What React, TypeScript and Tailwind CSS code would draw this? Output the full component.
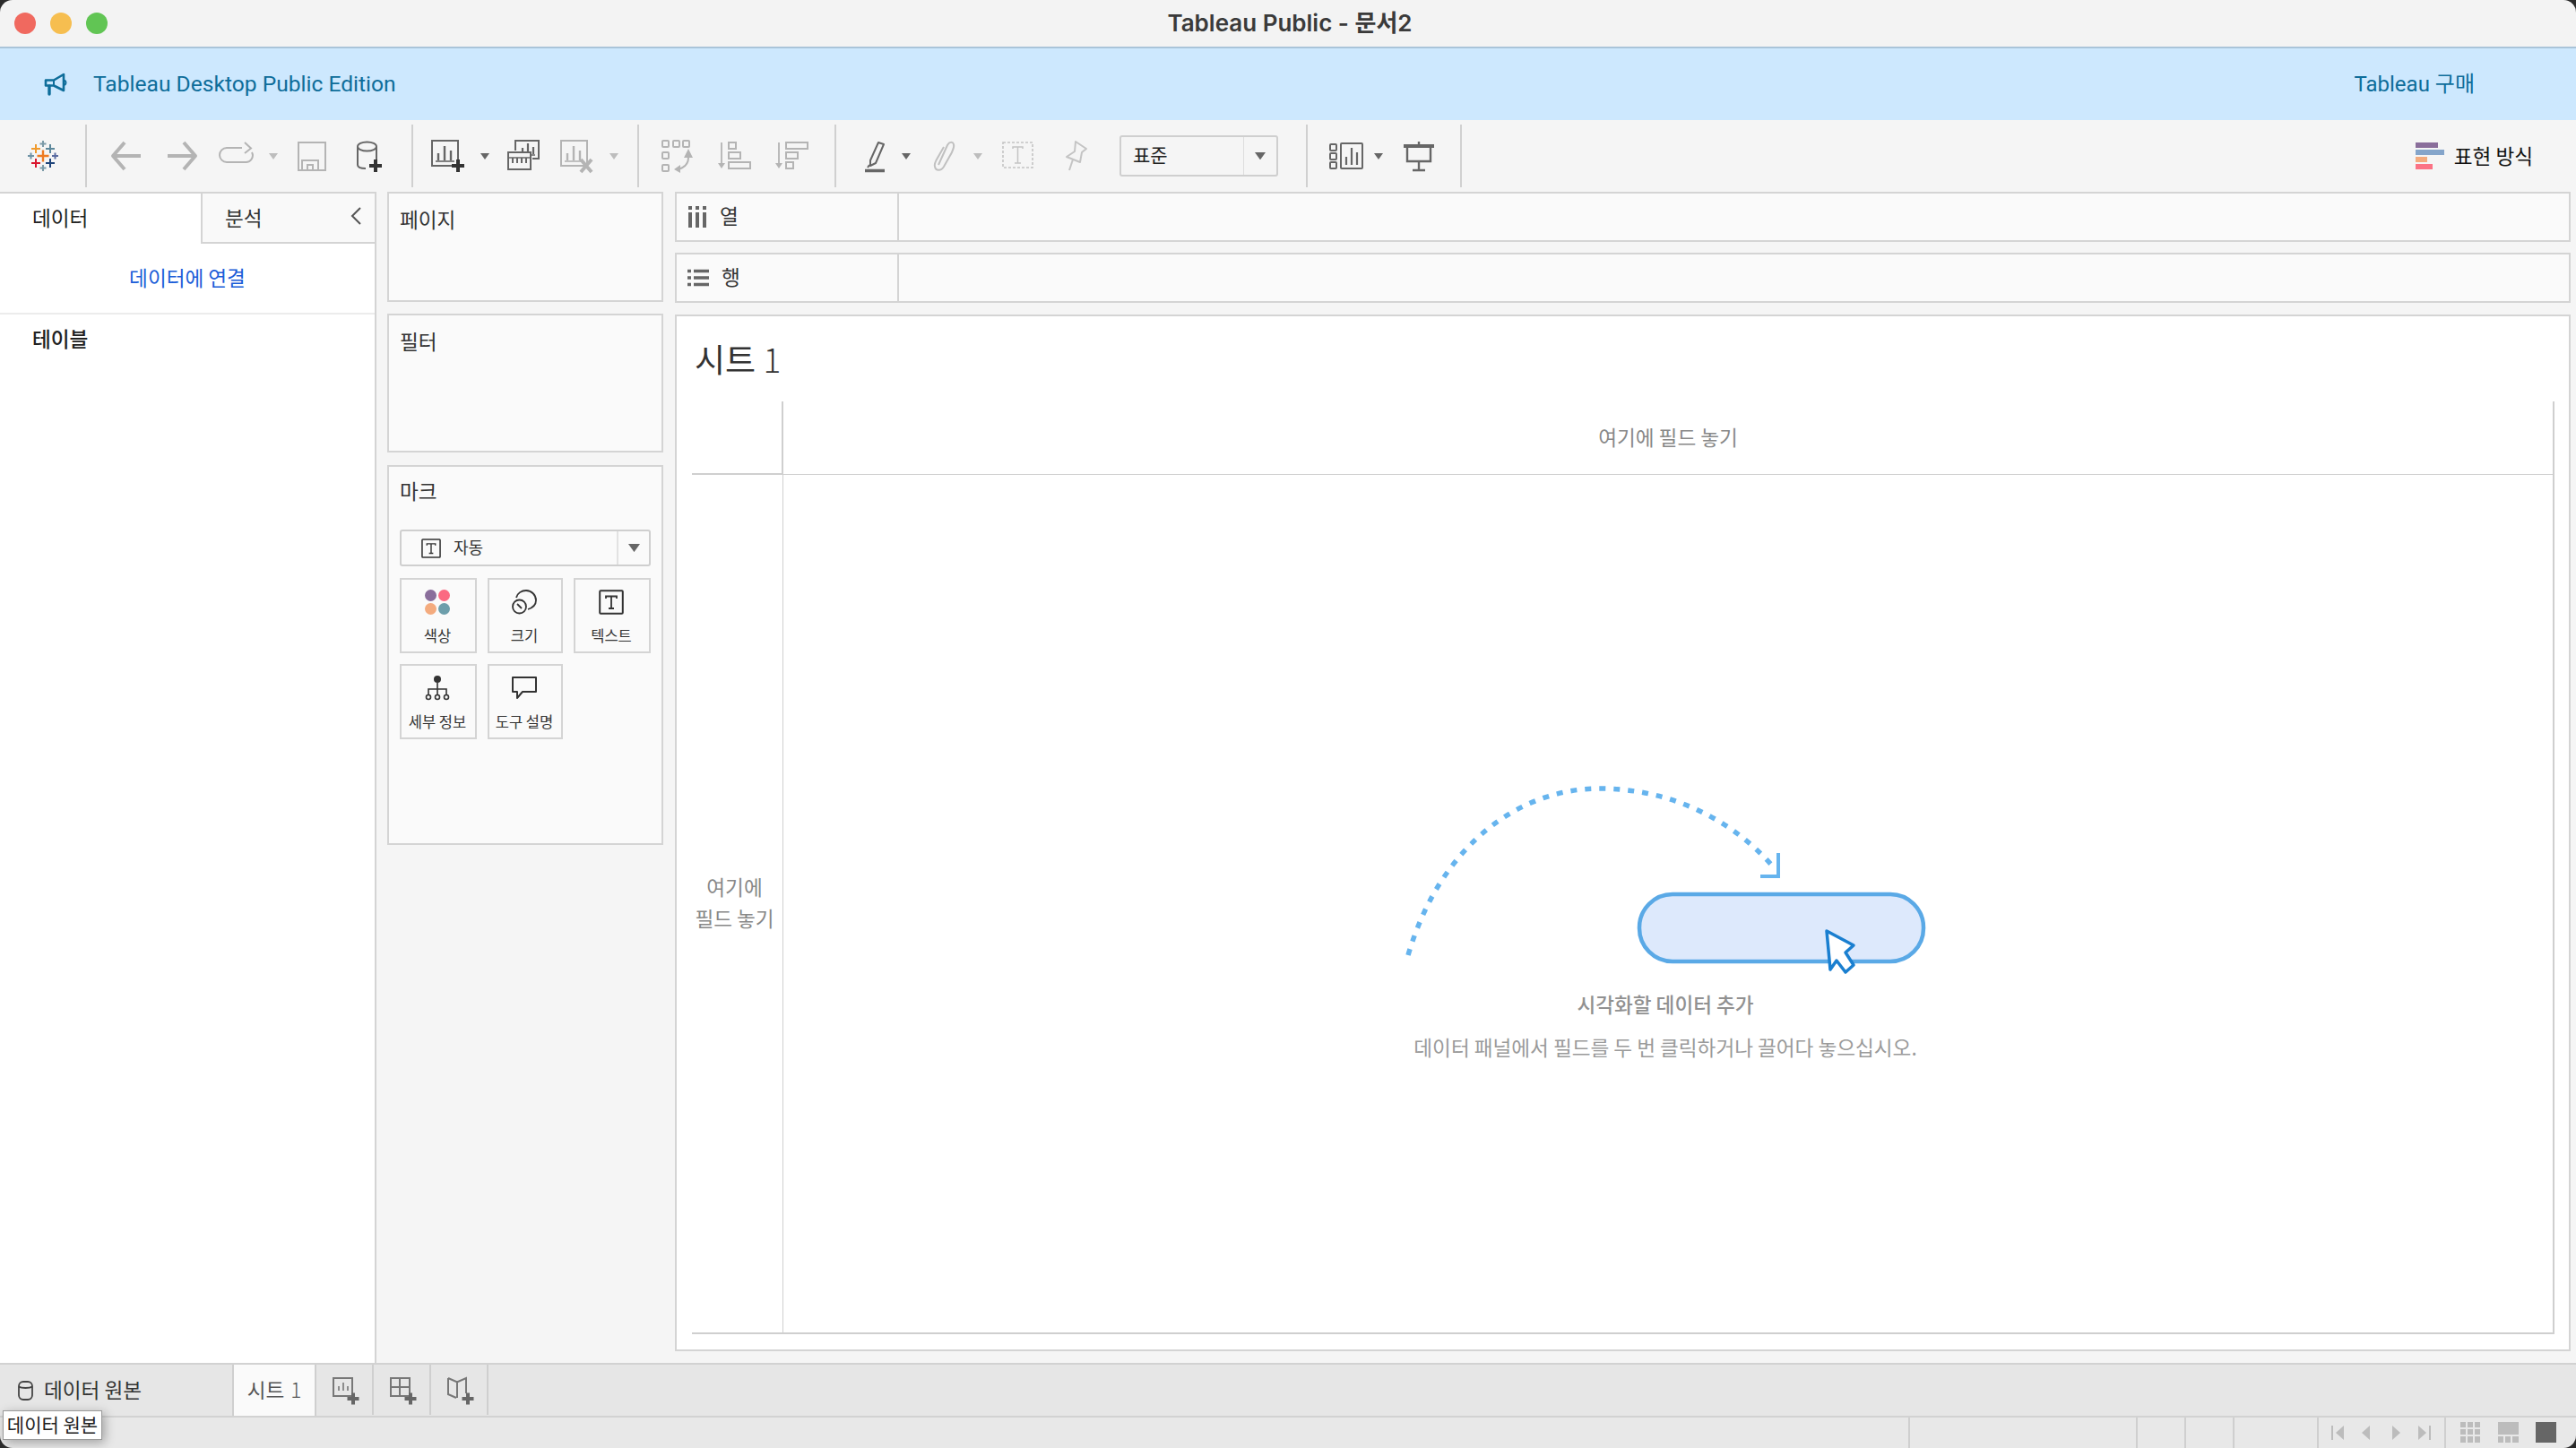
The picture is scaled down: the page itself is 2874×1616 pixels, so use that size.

import React from "react";

const G = "#b4b4b4";

function Svg({ w = 40, h = 40, children }: { w?: number; h?: number; children: React.ReactNode }) {
  return (
    <svg width={w} height={h} viewBox={`0 0 ${w} ${h}`} fill="none" className="block shrink-0">
      {children}
    </svg>
  );
}

function Plus({ x, y, c = "#3c3c3c", s = 14, t = 4 }: { x: number; y: number; c?: string; s?: number; t?: number }) {
  return <path d={`M${x - s / 2} ${y}H${x + s / 2}M${x} ${y - s / 2}V${y + s / 2}`} stroke={c} strokeWidth={t} />;
}

function Caret({ c = "#666666", s = 10 }: { c?: string; s?: number }) {
  return (
    <svg width={s} height={s * 0.7} viewBox="0 0 10 7" className="block shrink-0">
      <path d="M0 0H10L5 7Z" fill={c} />
    </svg>
  );
}

function Logo() {
  const cross = (x: number, y: number, s: number, c: string, t = 2) => (
    <path key={`${x}-${y}`} d={`M${x - s / 2} ${y}H${x + s / 2}M${x} ${y - s / 2}V${y + s / 2}`} stroke={c} strokeWidth={t} />
  );
  return (
    <Svg w={36} h={36}>
      {cross(18, 18, 13, "#ee7b22", 2.4)}
      {cross(10, 10, 10, "#f09a2c", 2)}
      {cross(26, 10, 10, "#5b879b", 2)}
      {cross(10, 26, 10, "#d9172f", 2)}
      {cross(26, 26, 10, "#1f447a", 2)}
      {cross(18, 4.5, 7, "#7b9aa8", 2)}
      {cross(18, 31.5, 7, "#7b9aa8", 2)}
      {cross(4.5, 18, 7, "#6f93a6", 2)}
      {cross(31.5, 18, 7, "#5a6ba0", 2)}
    </Svg>
  );
}

function Megaphone() {
  return (
    <svg width="26" height="26" viewBox="0 0 26 26" fill="none" className="block">
      <path d="M2 8.5H11L22 2V20L11 14.5H2Z" stroke="#0e6d9a" strokeWidth="2.6" strokeLinejoin="round" />
      <path d="M6 15V24" stroke="#0e6d9a" strokeWidth="3.4" strokeLinecap="round" />
      <path d="M11 8V15" stroke="#0e6d9a" strokeWidth="2" />
      <path d="M23 8.5C25 10 25 12.5 23 14" stroke="#0e6d9a" strokeWidth="2" />
    </svg>
  );
}

function BarsIcon({ c, x = 0, y = 0 }: { c: string; x?: number; y?: number }) {
  return (
    <g transform={`translate(${x} ${y})`} stroke={c} strokeWidth="2">
      <path d="M1 3H30V31H1Z" />
      <path d="M8 25V17M15 25V9M22 25V14" strokeWidth="2.4" />
      <path d="M5 26H26" strokeWidth="1.6" />
    </g>
  );
}

const tb = {
  back: (
    <Svg>
      <path d="M37 20H6M19 5L6 20L19 35" stroke={G} strokeWidth="4" strokeLinejoin="round" />
    </Svg>
  ),
  fwd: (
    <Svg>
      <path d="M3 20H34M21 5L34 20L21 35" stroke={G} strokeWidth="4" strokeLinejoin="round" />
    </Svg>
  ),
  redo: (
    <Svg>
      <path d="M26 11H9a7.5 7.5 0 0 0 0 16H30a7.5 7.5 0 0 0 7-11" stroke={G} strokeWidth="2" />
      <path d="M29 5L36 11.5L29 17" stroke={G} strokeWidth="2" />
    </Svg>
  ),
  save: (
    <Svg>
      <path d="M5 5H35V36H5Z" stroke={G} strokeWidth="2" />
      <path d="M9 36V25H27V36" stroke={G} strokeWidth="2" />
      <path d="M15 36V30H21V36" stroke={G} strokeWidth="2" />
    </Svg>
  ),
  ds: (
    <Svg>
      <ellipse cx="19.500" cy="9.500" rx="10.500" ry="5" stroke="#666" strokeWidth="2" />
      <path d="M9 10V30C9 33 12 34 18 34M30 10V24" stroke="#666" strokeWidth="2" />
      <Plus x={29} y={31} c="#333" s={14} t={4} />
    </Svg>
  ),
  add: (
    <Svg>
      <BarsIcon c="#666" x={1} y={0} />
      <Plus x={31} y={31} c="#333" s={14} t={4} />
    </Svg>
  ),
  dup: (
    <Svg>
      <path d="M12 14V3H38V23H31" stroke="#666" strokeWidth="2" />
      <path d="M20 18V11M26 18V6M32 18V10" stroke="#666" strokeWidth="2.200" />
      <path d="M20 19H34" stroke="#666" strokeWidth="1.500" />
      <path d="M4 16H29V35H4Z" stroke="#666" strokeWidth="2" fill="#f5f5f5" />
      <path d="M9 22V28M14 22V28M19 22V28M24 22V28" stroke="#666" strokeWidth="2" />
      <path d="M4 22H29" stroke="#666" strokeWidth="1.500" />
    </Svg>
  ),
  clear: (
    <Svg>
      <BarsIcon c={G} x={3} y={0} />
      <path d="M26 24L38 38M38 24L26 38" stroke={G} strokeWidth="4" />
    </Svg>
  ),
  swap: (
    <Svg w={40} h={40}>
      <g stroke={G} strokeWidth="2">
        <rect x="4" y="3" width="7" height="7" rx="1" />
        <rect x="16" y="3" width="7" height="7" rx="1" />
        <rect x="27" y="3" width="7" height="7" rx="1" />
        <rect x="4" y="16" width="7" height="7" rx="1" />
        <rect x="4" y="30" width="7" height="7" rx="1" />
        <path d="M33 16V22C33 30 28 33 22 35" />
      </g>
      <path d="M33 12L38 22H28ZM17 35L24 30V39Z" fill={G} />
    </Svg>
  ),
  sortA: (
    <Svg>
      <path d="M6 5V30" stroke={G} strokeWidth="1.800" />
      <path d="M2 28H10L6 34Z" fill={G} />
      <path d="M14 5H22V12H14ZM14 16H27V23H14ZM14 27H38V34H14Z" stroke={G} strokeWidth="2" />
    </Svg>
  ),
  sortD: (
    <Svg>
      <path d="M6 5V30" stroke={G} strokeWidth="1.800" />
      <path d="M2 28H10L6 34Z" fill={G} />
      <path d="M14 5H38V12H14ZM14 16H27V23H14ZM14 27H22V34H14Z" stroke={G} strokeWidth="2" />
    </Svg>
  ),
  pen: (
    <Svg>
      <path d="M25 5L31 7L22 28L16 31L16 25Z" stroke="#666" strokeWidth="2" strokeLinejoin="round" />
      <path d="M15 30L13 33" stroke="#666" strokeWidth="2" />
      <path d="M10 36.500H32" stroke="#666" strokeWidth="3.500" />
    </Svg>
  ),
  clip: (
    <Svg>
      <path
        d="M15 30L25 8C27 4 31 4 32 7C33 10 31 13 30 16L21 32C18 37 12 37 11 32C10 29 12 26 13 24L21 10"
        stroke="#c0c0c0"
        strokeWidth="2"
      />
    </Svg>
  ),
  text: (
    <Svg>
      <rect x="3" y="5" width="33" height="28" stroke="#c4c4c4" strokeWidth="1.600" strokeDasharray="3 2" />
      <path d="M14 12V10H25V12M19.500 10V28M16 28H23" stroke="#c4c4c4" strokeWidth="1.500" />
    </Svg>
  ),
  pin: (
    <Svg>
      <path d="M21 4L33 12L28 16L26 27L11 21L20 15Z" stroke="#c4c4c4" strokeWidth="2" strokeLinejoin="round" />
      <path d="M18 24L14 36" stroke="#c4c4c4" strokeWidth="2" />
    </Svg>
  ),
  cards: (
    <Svg>
      <rect x="3" y="7" width="7" height="7" rx="1" stroke="#666" strokeWidth="2" />
      <rect x="3" y="17" width="7" height="7" rx="1" stroke="#666" strokeWidth="2" />
      <rect x="3" y="27" width="7" height="7" rx="1" stroke="#666" strokeWidth="2" />
      <rect x="15" y="6" width="24" height="28" rx="1" stroke="#666" strokeWidth="2" />
      <path d="M21 30V21M27 30V11M33 30V16" stroke="#666" strokeWidth="2.200" />
    </Svg>
  ),
  present: (
    <Svg>
      <path d="M3 9H37" stroke="#666" strokeWidth="4" />
      <path d="M7 11V26H33V11" stroke="#666" strokeWidth="2.400" />
      <path d="M20 4V7M20 26V36M13 36H27" stroke="#666" strokeWidth="2.400" />
    </Svg>
  ),
};

function Sep() {
  return <div className="w-[2px] h-[70px] bg-[#d0d0d0] shrink-0" />;
}

function Slot({ className, children }: { className: string; children: React.ReactNode }) {
  return <div className={`flex items-center justify-center shrink-0 ${className}`}>{children}</div>;
}

function Toolbar() {
  return (
    <div className="h-[80px] bg-[#f5f5f5] flex items-center shrink-0">
      <Slot className="w-[95px]">
        <Logo />
      </Slot>
      <Sep />
      <div className="w-[362px] pl-[11px] flex items-center shrink-0">
        <Slot className="w-[64px]">{tb.back}</Slot>
        <Slot className="w-[64px]">{tb.fwd}</Slot>
        <Slot className="w-[56px]">{tb.redo}</Slot>
        <Slot className="w-[26px]"><Caret c="#bdbdbd" /></Slot>
        <Slot className="w-[60px]">{tb.save}</Slot>
        <Slot className="w-[64px]">{tb.ds}</Slot>
      </div>
      <Sep />
      <div className="w-[250px] pl-[11px] flex items-center shrink-0">
        <Slot className="w-[56px]">{tb.add}</Slot>
        <Slot className="w-[26px]"><Caret /></Slot>
        <Slot className="w-[58px]">{tb.dup}</Slot>
        <Slot className="w-[60px]">{tb.clear}</Slot>
        <Slot className="w-[26px]"><Caret c="#bdbdbd" /></Slot>
      </div>
      <Sep />
      <div className="w-[218px] pl-[11px] flex items-center shrink-0">
        <Slot className="w-[62px]">{tb.swap}</Slot>
        <Slot className="w-[66px]">{tb.sortA}</Slot>
        <Slot className="w-[62px]">{tb.sortD}</Slot>
      </div>
      <Sep />
      <div className="w-[524px] pl-[17px] flex items-center shrink-0">
        <Slot className="w-[50px]">{tb.pen}</Slot>
        <Slot className="w-[22px]"><Caret /></Slot>
        <Slot className="w-[60px]">{tb.clip}</Slot>
        <Slot className="w-[18px]"><Caret c="#bdbdbd" /></Slot>
        <Slot className="w-[72px]">{tb.text}</Slot>
        <Slot className="w-[54px]">{tb.pin}</Slot>
        <div className="ml-[23px] w-[177px] h-[46px] border-2 border-[#cfcfcf] rounded-[3px] flex items-center shrink-0">
          <div className="flex-1 pl-[13px] text-[21px] text-[#222] -mt-[2px]">표준</div>
          <div className="w-[37px] h-full border-l border-[#dedede] flex items-center justify-center">
            <Caret s={12} />
          </div>
        </div>
      </div>
      <Sep />
      <div className="w-[170px] pl-[14px] flex items-center shrink-0">
        <Slot className="w-[56px]">{tb.cards}</Slot>
        <Slot className="w-[18px]"><Caret /></Slot>
        <Slot className="w-[72px]">{tb.present}</Slot>
      </div>
      <Sep />
      <div className="ml-auto mr-[48px] flex items-center gap-[11px]">
        <div className="flex flex-col gap-[2px] w-[32px]">
          <div className="h-[6px] w-[25px] bg-[#8a6e9b]" />
          <div className="h-[6px] w-[32px] bg-[#85a5ca]" />
          <div className="h-[6px] w-[13px] bg-[#f4ab7e]" />
          <div className="h-[6px] w-[19px] bg-[#fb7385]" />
        </div>
        <span className="text-[22.6px] text-[#111] leading-[30px]">표현 방식</span>
      </div>
    </div>
  );
}

function LeftPanel() {
  return (
    <div className="w-[420px] shrink-0 bg-white border-r-2 border-t-2 border-[#d4d4d4] flex flex-col">
      <div className="h-[56px] flex shrink-0">
        <div className="w-[224px] pl-[36px] pt-[12px] text-[22.6px] leading-[30px] text-[#222]">데이터</div>
        <div className="flex-1 bg-[#f9f9f9] border-l-2 border-b-2 border-[#d4d4d4] pl-[25px] pt-[12px] flex items-start justify-between pr-[14px] text-[22.6px] leading-[30px] text-[#333]">
          <span>분석</span>
          <svg width="14" height="20" viewBox="0 0 14 20" fill="none" className="mt-[3px]">
            <path d="M12 1L3 10L12 19" stroke="#555" strokeWidth="2" />
          </svg>
        </div>
      </div>
      <div className="h-[79px] shrink-0 border-b-2 border-[#ececec] flex items-center justify-center text-[22.6px] text-[#1a5dd8]">
        <span className="-mt-[1px]">데이터에 연결</span>
      </div>
      <div className="pl-[36px] pt-[12px] text-[22.6px] leading-[30px] font-medium text-[#222]">테이블</div>
    </div>
  );
}

function TIcon({ s = 28 }: { s?: number }) {
  return (
    <svg width={s} height={s} viewBox="0 0 28 28" fill="none" className="block shrink-0">
      <rect x="1.200" y="1.200" width="25.600" height="25.600" rx="1" stroke="#333" strokeWidth="2" />
      <path d="M8 10V7.500H20V10M14 7.500V21M11 21H17" stroke="#333" strokeWidth="1.800" />
    </svg>
  );
}

function Tile({ label, w, children }: { label: string; w: string; children: React.ReactNode }) {
  return (
    <div className={`${w} h-[84px] border-2 border-[#d4d4d4] flex flex-col items-center shrink-0`}>
      <div className="h-[46px] w-full flex items-center justify-center mt-[2px] pr-[2px]">{children}</div>
      <div className="text-[16.500px] leading-[24px] text-[#333] mt-[2px] pr-[2px] whitespace-nowrap">{label}</div>
    </div>
  );
}

function Cards() {
  return (
    <div className="w-[308px] shrink-0 ml-[12px] flex flex-col">
      <div className="h-[123px] shrink-0 bg-[#fafafa] border-2 border-[#d4d4d4] pl-[12px] pt-[14px] text-[22.6px] leading-[30px] text-[#333]">페이지</div>
      <div className="mt-[13px] h-[155px] shrink-0 bg-[#fafafa] border-2 border-[#d4d4d4] pl-[12px] pt-[14px] text-[22.6px] leading-[30px] text-[#333]">필터</div>
      <div className="mt-[14px] h-[424px] shrink-0 bg-[#fafafa] border-2 border-[#d4d4d4] px-[12px] pt-[12px]">
        <div className="text-[22.6px] leading-[30px] text-[#333]">마크</div>
        <div className="mt-[28px] h-[41px] w-[280px] border-2 border-[#cfcfcf] rounded-[3px] flex items-center">
          <div className="flex-1 flex items-center pl-[22px] gap-[14px] text-[18px] text-[#333]">
            <TIcon s={22} />
            <span className="-mt-[2px]">자동</span>
          </div>
          <div className="w-[36px] h-full border-l-2 border-[#e2e2e2] flex items-center justify-center">
            <Caret s={13} />
          </div>
        </div>
        <div className="mt-[13px] flex flex-col gap-[12px]">
          <div className="flex gap-[12px]">
            <Tile label="색상" w="w-[86px]">
              <div className="grid grid-cols-2 gap-[2px]">
                <div className="w-[13px] h-[13px] rounded-full bg-[#8a6e9b]" />
                <div className="w-[13px] h-[13px] rounded-full bg-[#fb6a82]" />
                <div className="w-[13px] h-[13px] rounded-full bg-[#f4ab7e]" />
                <div className="w-[13px] h-[13px] rounded-full bg-[#6d9eab]" />
              </div>
            </Tile>
            <Tile label="크기" w="w-[84px]">
              <svg width="30" height="30" viewBox="0 0 30 30" fill="none" className="block">
                <path d="M6 10C7 5 12 2 17 2C23 2 28 7 28 13C28 18 25 21 19 23" stroke="#333" strokeWidth="1.800" />
                <circle cx="9.500" cy="20" r="7.500" stroke="#333" strokeWidth="1.800" />
                <path d="M7 17L12 22" stroke="#333" strokeWidth="1.800" />
              </svg>
            </Tile>
            <Tile label="텍스트" w="w-[86px]">
              <TIcon />
            </Tile>
          </div>
          <div className="flex gap-[12px]">
            <Tile label="세부 정보" w="w-[86px]">
              <svg width="28" height="30" viewBox="0 0 28 30" fill="none" className="block">
                <circle cx="14" cy="5" r="4" fill="#333" />
                <path d="M14 9V22M4 22V16H24V22" stroke="#333" strokeWidth="1.600" />
                <circle cx="4" cy="25" r="2.500" stroke="#333" strokeWidth="1.600" />
                <circle cx="14" cy="25" r="2.500" stroke="#333" strokeWidth="1.600" />
                <circle cx="24" cy="25" r="2.500" stroke="#333" strokeWidth="1.600" />
              </svg>
            </Tile>
            <Tile label="도구 설명" w="w-[84px]">
              <svg width="30" height="28" viewBox="0 0 30 28" fill="none" className="block">
                <path d="M2 2H28V18H13L7 25V18H2Z" stroke="#333" strokeWidth="2" strokeLinejoin="round" />
              </svg>
            </Tile>
          </div>
        </div>
      </div>
    </div>
  );
}

function Shelf({ label, icon, h, top }: { label: string; icon: React.ReactNode; h: string; top?: string }) {
  return (
    <div className={`${h} ${top ?? ""} shrink-0 bg-[#fafafa] border-2 border-[#d4d4d4] flex`}>
      <div className="w-[248px] h-full border-r-2 border-[#d4d4d4] flex items-center pl-[12px] gap-[14px] text-[22.6px] text-[#333]">
        {icon}
        <span className="-mt-[3px]">{label}</span>
      </div>
    </div>
  );
}

function Illustration() {
  return (
    <svg width="600" height="225" viewBox="0 0 600 225" fill="none" className="block shrink-0">
      <path
        d="M13 196C50 70 140 10 226 10C300 10 370 40 420 97"
        stroke="#66b4ee"
        strokeWidth="5.500"
        strokeDasharray="7 9"
      />
      <path d="M426 82V108H406" stroke="#66b4ee" strokeWidth="4" />
      <rect x="271" y="128" width="317" height="75" rx="37" fill="#dde9fc" stroke="#5aa9e6" strokeWidth="4.500" />
      <path
        d="M480 169L510 185L501 193L510 207L501 215L491 202L484 212Z"
        fill="#fff"
        stroke="#1a7fd0"
        strokeWidth="3.500"
        strokeLinejoin="round"
      />
    </svg>
  );
}

function MainCard() {
  return (
    <div className="h-[1157px] shrink-0 mt-[13px] bg-white border-2 border-[#d4d4d4] pl-[17px] pr-[16px] pb-[17px] flex flex-col">
      <div className="h-[95px] shrink-0 pl-[3px] pt-[22px] text-[37px] leading-[50px] text-[#333]">
        시트 <span className="font-light">1</span>
      </div>
      <div className="flex-1 min-h-0 flex flex-col text-[22.6px] text-[#888]">
        <div className="h-[82px] shrink-0 flex">
          <div className="w-[102px] border-r-2 border-b-2 border-[#cfcfcf]" />
          <div className="flex-1 border-b border-r-2 border-[#cfcfcf] flex items-center justify-center">
            <span className="-mt-[2px]">여기에 필드 놓기</span>
          </div>
        </div>
        <div className="flex-1 min-h-0 flex">
          <div className="w-[102px] border-r border-b-2 border-[#cfcfcf] flex items-center justify-center text-center leading-[35px] pr-[6px] pb-[4px]">
            여기에
            <br />
            필드 놓기
          </div>
          <div className="flex-1 border-b-2 border-r-2 border-[#cfcfcf] flex flex-col items-center pt-[340px] pr-[6px]">
            <Illustration />
            <div className="mt-[11px] leading-[30px] font-medium text-[#919191]">시각화할 데이터 추가</div>
            <div className="mt-[18px] leading-[30px] text-[#9a9a9a]">데이터 패널에서 필드를 두 번 클릭하거나 끌어다 놓으십시오.</div>
          </div>
        </div>
      </div>
    </div>
  );
}

function Body() {
  return (
    <div className="h-[1307px] shrink-0 flex bg-[#f5f5f5]">
      <LeftPanel />
      <Cards />
      <div className="flex-1 ml-[13px] mr-[6px] flex flex-col">
        <Shelf
          label="열"
          h="h-[56px]"
          icon={
            <svg width="22" height="24" viewBox="0 0 22 24" fill="none" className="block">
              <path d="M3 7V24M11 7V24M19 7V24" stroke="#666" strokeWidth="4" />
              <path d="M3 0V4M11 0V4M19 0V4" stroke="#666" strokeWidth="4" />
            </svg>
          }
        />
        <Shelf
          label="행"
          h="h-[56px]"
          top="mt-[12px]"
          icon={
            <svg width="24" height="20" viewBox="0 0 24 20" fill="none" className="block">
              <path d="M7 2.500H24M7 10H24M7 17.500H24" stroke="#666" strokeWidth="3.400" />
              <path d="M0 2.500H4M0 10H4M0 17.500H4" stroke="#666" strokeWidth="3.400" />
            </svg>
          }
        />
        <MainCard />
      </div>
    </div>
  );
}

function TabBar() {
  const cell = "w-[64px] h-[56px] border-r-2 border-[#cfcfcf] flex items-center justify-center shrink-0";
  return (
    <div className="h-[61px] shrink-0 bg-[#e6e6e6] border-t-2 border-b-2 border-[#d2d2d2] flex">
      <div className="w-[261px] pl-[20px] flex items-center gap-[12px] text-[22.6px] text-[#333] border-r-2 border-[#cfcfcf] shrink-0">
        <svg width="17" height="22" viewBox="0 0 17 22" fill="none" className="block">
          <rect x="1" y="1" width="15" height="20" rx="5" stroke="#444" strokeWidth="1.800" />
          <path d="M1 6.500C4 8.500 13 8.500 16 6.500" stroke="#444" strokeWidth="1.800" />
        </svg>
        <span className="-mt-[2px]">데이터 원본</span>
      </div>
      <div className="w-[92px] bg-[#fafafa] border-r-2 border-[#cfcfcf] flex items-center justify-center text-[22.6px] text-[#555] shrink-0">
        <span className="-mt-[2px]">
          시트 <span className="font-light ml-[2px]">1</span>
        </span>
      </div>
      <div className={cell}>
        <Svg w={36} h={36}>
          <path d="M6 5H27V25H6Z" stroke="#777" strokeWidth="2" />
          <path d="M12 19V14M17 19V10M22 19V14" stroke="#777" strokeWidth="1.600" />
          <Plus x={28} y={28} c="#666" s={13} t={4} />
        </Svg>
      </div>
      <div className={cell}>
        <Svg w={36} h={36}>
          <path d="M6 5H27V25H6ZM6 15H27M16 5V25" stroke="#777" strokeWidth="2" />
          <Plus x={28} y={28} c="#666" s={13} t={4} />
        </Svg>
      </div>
      <div className={cell}>
        <Svg w={36} h={36}>
          <path d="M6 5L15 9H17L26 5V22M6 5V23L15 27M16 9V27" stroke="#777" strokeWidth="2" />
          <Plus x={28} y={28} c="#666" s={13} t={4} />
        </Svg>
      </div>
    </div>
  );
}

function StatusBar() {
  const c = "#bcbcbc";
  return (
    <div className="flex-1 bg-[#e8e8e8] flex justify-end relative">
      <div className="absolute left-[3px] top-[-8px] h-[33px] w-[111px] bg-white border border-[#9a9a9a] shadow-[3px_3px_12px_rgba(0,0,0,0.3)] flex items-center justify-center text-[21px] text-[#222] whitespace-nowrap">
        <span className="-mt-[2px]">데이터 원본</span>
      </div>
      <div className="w-[254px] border-l-2 border-[#cfcfcf]" />
      <div className="w-[54px] border-l-2 border-[#cfcfcf]" />
      <div className="w-[54px] border-l-2 border-[#cfcfcf]" />
      <div className="w-[94px] border-l-2 border-[#cfcfcf]" />
      <div className="w-[142px] border-l-2 border-[#cfcfcf] flex items-center pl-[14px] gap-[17px]">
        <svg width="15" height="16" viewBox="0 0 15 16"><path d="M1 0V16" stroke={c} strokeWidth="2" /><path d="M14 0V16L5 8Z" fill={c} /></svg>
        <svg width="15" height="16" viewBox="0 0 15 16"><path d="M11 0V16L2 8Z" fill={c} /></svg>
        <svg width="15" height="16" viewBox="0 0 15 16"><path d="M4 0V16L13 8Z" fill={c} /></svg>
        <svg width="15" height="16" viewBox="0 0 15 16"><path d="M14 0V16" stroke={c} strokeWidth="2" /><path d="M1 0V16L10 8Z" fill={c} /></svg>
      </div>
      <div className="w-[147px] border-l-2 border-[#cfcfcf] flex items-center pl-[16px] gap-[19px] pb-[2px]">
        <svg width="23" height="23" viewBox="0 0 23 23" fill={c}>
          <path d="M0 0H6V6H0ZM8 0H14V6H8ZM16 0H22V6H16ZM0 8H6V14H0ZM8 8H14V14H8ZM16 8H22V14H16ZM0 16H6V23H0ZM8 16H14V23H8ZM16 16H22V23H16Z" />
        </svg>
        <svg width="23" height="23" viewBox="0 0 23 23" fill={c}>
          <path d="M0 0H23V14H0ZM0 16H6V23H0ZM8 16H14V23H8ZM16 16H23V23H16Z" />
        </svg>
        <div className="w-[23px] h-[23px] bg-[#666]" />
      </div>
    </div>
  );
}

export default function App() {
  return (
    <div className="w-[2874px] h-[1616px] bg-[#2b2b2b] font-['Noto_Sans_CJK_KR',sans-serif] overflow-hidden">
      <div className="w-full h-full rounded-[14px] overflow-hidden flex flex-col">
        <div className="h-[54px] shrink-0 bg-[#f3f3f3] border-b-2 border-[#a9c4d9] flex items-center relative">
          <div className="flex items-center gap-[16px] pl-[16px]">
            <div className="w-[24px] h-[24px] rounded-full bg-[#f0695f]" />
            <div className="w-[24px] h-[24px] rounded-full bg-[#f6be50]" />
            <div className="w-[24px] h-[24px] rounded-full bg-[#61c554]" />
          </div>
          <div className="flex-1 pr-[116px] pb-[2px] text-center text-[26px] font-semibold text-[#3a3a3a] font-['Inter','Noto_Sans_CJK_KR',sans-serif]">
            Tableau Public - 문서2
          </div>
        </div>
        <div className="h-[80px] shrink-0 bg-[#cde8fe] flex items-center pl-[49px] pr-[113px] text-[24px] text-[#0e6d9a] font-['Roboto','Noto_Sans_CJK_KR',sans-serif]">
          <Megaphone />
          <span className="ml-[29px] text-[24.6px]">Tableau Desktop Public Edition</span>
          <span className="ml-auto">Tableau 구매</span>
        </div>
        <Toolbar />
        <Body />
        <TabBar />
        <StatusBar />
      </div>
    </div>
  );
}
